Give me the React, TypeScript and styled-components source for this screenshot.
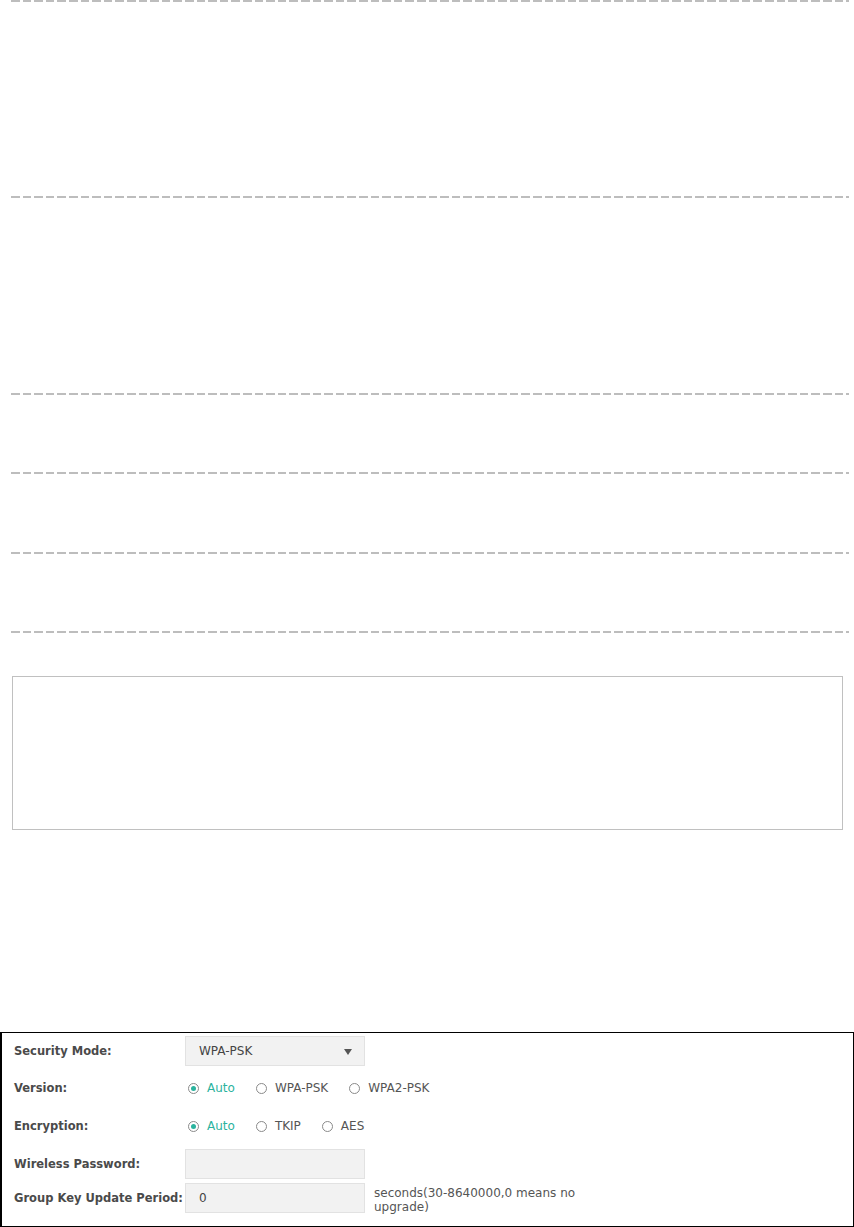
import React from "react";
import styled, { createGlobalStyle } from "styled-components";

const Global = createGlobalStyle`
  html, body { margin: 0; padding: 0; background: #fff; }
  body { font-family: "DejaVu Sans", Verdana, sans-serif; }
`;

const Page = styled.div`
  width: 854px;
  height: 1227px;
  display: flex;
  flex-direction: column;
  overflow: hidden;
`;

const Divider = styled.div`
  margin-left: 11px;
  width: 838px;
  height: 2px;
  flex: none;
  background: repeating-linear-gradient(
    to right,
    #bdbdbd 0,
    #bdbdbd 8.5px,
    transparent 8.5px,
    transparent 11.6px
  );
`;

const Gap = styled.div<{ $h: number }>`
  height: ${(p) => p.$h}px;
  flex: none;
`;

const EmptyBox = styled.div`
  margin-left: 12px;
  width: 829px;
  height: 152px;
  border: 1px solid #c0c0c0;
  flex: none;
`;

const FormBox = styled.div`
  margin-top: 202px;
  width: 851px;
  height: 193px;
  border: 1px solid #000;
  border-left-width: 2px;
  box-sizing: content-box;
  display: flex;
  flex-direction: column;
  padding-top: 3px;
`;

const Row = styled.div<{ $mt: number }>`
  display: flex;
  align-items: center;
  height: 30px;
  margin-top: ${(p) => p.$mt}px;
`;

const Label = styled.div`
  width: 171px;
  padding-left: 12px;
  flex: none;
  font-weight: bold;
  font-size: 11.5px;
  color: #4a4a4a;
`;

const FieldBox = styled.div`
  width: 180px;
  height: 30px;
  box-sizing: border-box;
  background: #f2f2f2;
  border: 1px solid #e2e2e2;
  display: flex;
  align-items: center;
  justify-content: space-between;
  padding: 0 12px 0 13px;
  font-size: 12px;
  color: #444;
`;

const Arrow = styled.span`
  width: 0;
  height: 0;
  border-left: 4.5px solid transparent;
  border-right: 4.5px solid transparent;
  border-top: 6px solid #555;
  margin-top: 2px;
`;

const Radios = styled.div`
  display: flex;
  align-items: center;
  gap: 21px;
  padding-left: 3px;
`;

const Option = styled.label<{ $on?: boolean }>`
  display: flex;
  align-items: center;
  gap: 8px;
  font-size: 12px;
  color: ${(p) => (p.$on ? "#2bb39e" : "#555")};
`;

const Circle = styled.span<{ $on?: boolean }>`
  width: 11px;
  height: 11px;
  box-sizing: border-box;
  border-radius: 50%;
  border: 1px solid #8a8a8a;
  display: flex;
  align-items: center;
  justify-content: center;
  &::after {
    content: "";
    width: 5px;
    height: 5px;
    border-radius: 50%;
    background: ${(p) => (p.$on ? "#2bb39e" : "transparent")};
  }
`;

const Hint = styled.div`
  margin-left: 9px;
  font-size: 12px;
  line-height: 14px;
  color: #555;
  width: 220px;
  margin-top: 4px;
`;

const RadioGroup = ({ options }: { options: string[] }) => (
  <Radios>
    {options.map((o, i) => (
      <Option key={o} $on={i === 0}>
        <Circle $on={i === 0} />
        {o}
      </Option>
    ))}
  </Radios>
);

export default function App() {
  return (
    <Page>
      <Global />
      <Divider />
      <Gap $h={194} />
      <Divider />
      <Gap $h={195} />
      <Divider />
      <Gap $h={77} />
      <Divider />
      <Gap $h={78} />
      <Divider />
      <Gap $h={77} />
      <Divider />
      <Gap $h={43} />
      <EmptyBox />
      <FormBox>
        <Row $mt={0}>
          <Label>Security Mode:</Label>
          <FieldBox>
            WPA-PSK
            <Arrow />
          </FieldBox>
        </Row>
        <Row $mt={7}>
          <Label>Version:</Label>
          <RadioGroup options={["Auto", "WPA-PSK", "WPA2-PSK"]} />
        </Row>
        <Row $mt={8}>
          <Label>Encryption:</Label>
          <RadioGroup options={["Auto", "TKIP", "AES"]} />
        </Row>
        <Row $mt={8}>
          <Label>Wireless Password:</Label>
          <FieldBox />
        </Row>
        <Row $mt={4}>
          <Label>Group Key Update Period:</Label>
          <FieldBox>0</FieldBox>
          <Hint>seconds(30-8640000,0 means no upgrade)</Hint>
        </Row>
      </FormBox>
    </Page>
  );
}
